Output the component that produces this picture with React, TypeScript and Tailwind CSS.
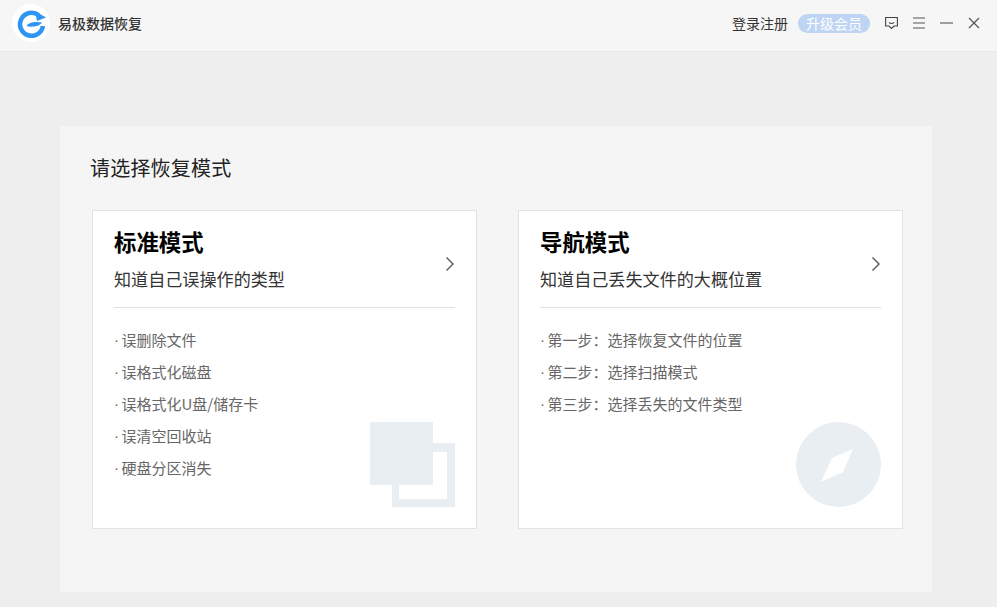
import React from "react";

const font = "font-['Noto_Sans_CJK_SC','Liberation_Sans',sans-serif]";

function Chevron() {
  return (
    <svg width="10" height="16" viewBox="0 0 10 16" fill="none" stroke="#555" strokeWidth="1.4" className="shrink-0">
      <path d="M1.5 1.5 L8 8 L1.5 14.5" />
    </svg>
  );
}

function Card({ title, sub, items, art }: { title: string; sub: string; items: string[]; art: React.ReactNode }) {
  return (
    <div className="relative w-[385px] h-[319px] shrink-0 bg-white border border-[#e2e2e2] px-[21px]">
      <div className="flex items-center justify-between h-[97px] border-b border-[#e0e0e0]">
        <div className="flex flex-col self-start pt-[15px]">
          <div className="text-[22.4px] leading-[30px] font-bold text-black">{title}</div>
          <div className="mt-[11px] text-[17.1px] leading-[24px] text-[#333]">{sub}</div>
        </div>
        <div className="mt-[10px]"><Chevron /></div>
      </div>
      <div className="pt-[16px] flex flex-col">
        {items.map((t) => (
          <div key={t} className="flex h-[32px] leading-[32px] text-[15px] text-[#666]">
            <span className="w-[7.5px] shrink-0 font-['Liberation_Sans']">·</span>
            <span>{t}</span>
          </div>
        ))}
      </div>
      <div className="absolute right-[21px] bottom-[21px]">{art}</div>
    </div>
  );
}

export default function App() {
  return (
    <div className={`w-[1002px] h-[607px] bg-white overflow-hidden ${font}`}>
      <div className="w-[997px] h-[607px] bg-[#eeeeee] flex flex-col">
        <div className="h-[52px] shrink-0 bg-[#f6f6f6] border-b border-[#e6e8ec] flex items-center pb-[5px]">
          <div className="ml-[12px] w-[38px] h-[38px] rounded-full bg-white flex items-center justify-center">
            <svg width="30" height="30" viewBox="0 0 30 30" fill="none">
              <path d="M22.5 7.2 A11.5 11.5 0 1 0 26.9 18" stroke="#2e95f3" strokeWidth="4.6" />
              <path d="M19 3 L30 9.5 L21 13 Z" fill="#2e95f3" />
              <path d="M10.5 18 C12 14.5 20 13 26 14.5 C24 18.5 15 19.5 10.5 18 Z" fill="#2e95f3" />
            </svg>
          </div>
          <div className="ml-[8px] text-[14px] font-medium text-[#333]">易极数据恢复</div>
          <div className="ml-auto flex items-center">
            <div className="text-[14px] text-[#333]">登录注册</div>
            <div className="ml-[10px] w-[72px] h-[19px] rounded-full bg-[#bdd4f2] text-white text-[14px] leading-[19px] text-center">升级会员</div>
            <svg className="ml-[15px]" width="13" height="14" viewBox="0 0 13 14" fill="none" stroke="#444" strokeWidth="1.1">
              <path d="M0.6 1.5 H12.4 V10 H9 L6.5 12.5 L4 10 H0.6 Z" />
              <path d="M4 6.5 Q6.5 8.5 9 6.5" />
            </svg>
            <svg className="ml-[15px]" width="12" height="12" viewBox="0 0 12 12" stroke="#555" strokeWidth="1.1">
              <path d="M0 1 H12 M0 6 H12 M0 11 H12" />
            </svg>
            <svg className="ml-[15px]" width="13" height="12" viewBox="0 0 13 12" stroke="#555" strokeWidth="1.1">
              <path d="M0 6 H13" />
            </svg>
            <svg className="ml-[15px] mr-[17px]" width="12" height="12" viewBox="0 0 12 12" stroke="#555" strokeWidth="1.2">
              <path d="M1 1 L11 11 M11 1 L1 11" />
            </svg>
          </div>
        </div>
        <div className="flex-1 pl-[60px] pr-[65px] pt-[74px]">
          <div className="h-[466px] bg-[#f5f5f5] pl-[32px] pr-[29px]">
            <div className="h-[84px] pt-[27px] ml-[-2px] text-[20px] tracking-[0.2px] leading-[30px] text-[#222]">请选择恢复模式</div>
            <div className="flex gap-[41px]">
              <Card
                title="标准模式"
                sub="知道自己误操作的类型"
                items={["误删除文件", "误格式化磁盘", "误格式化U盘/储存卡", "误清空回收站", "硬盘分区消失"]}
                art={
                  <svg width="85" height="85" viewBox="0 0 85 85">
                    <path fill="#e9eef3" d="M0 0 H63 V63 H0 Z" />
                    <path fill="#e9eef3" d="M63 21 H85 V85 H22 V63 H29 V77 H77 V30 H63 Z" />
                  </svg>
                }
              />
              <Card
                title="导航模式"
                sub="知道自己丢失文件的大概位置"
                items={["第一步：选择恢复文件的位置", "第二步：选择扫描模式", "第三步：选择丢失的文件类型"]}
                art={
                  <svg width="85" height="85" viewBox="0 0 85 85">
                    <circle cx="42.5" cy="42.5" r="42.5" fill="#e9eef3" />
                    <path fill="#fff" d="M57 27 L47 50 L25 60 L36 36 Z" />
                  </svg>
                }
              />
            </div>
          </div>
        </div>
      </div>
    </div>
  );
}
